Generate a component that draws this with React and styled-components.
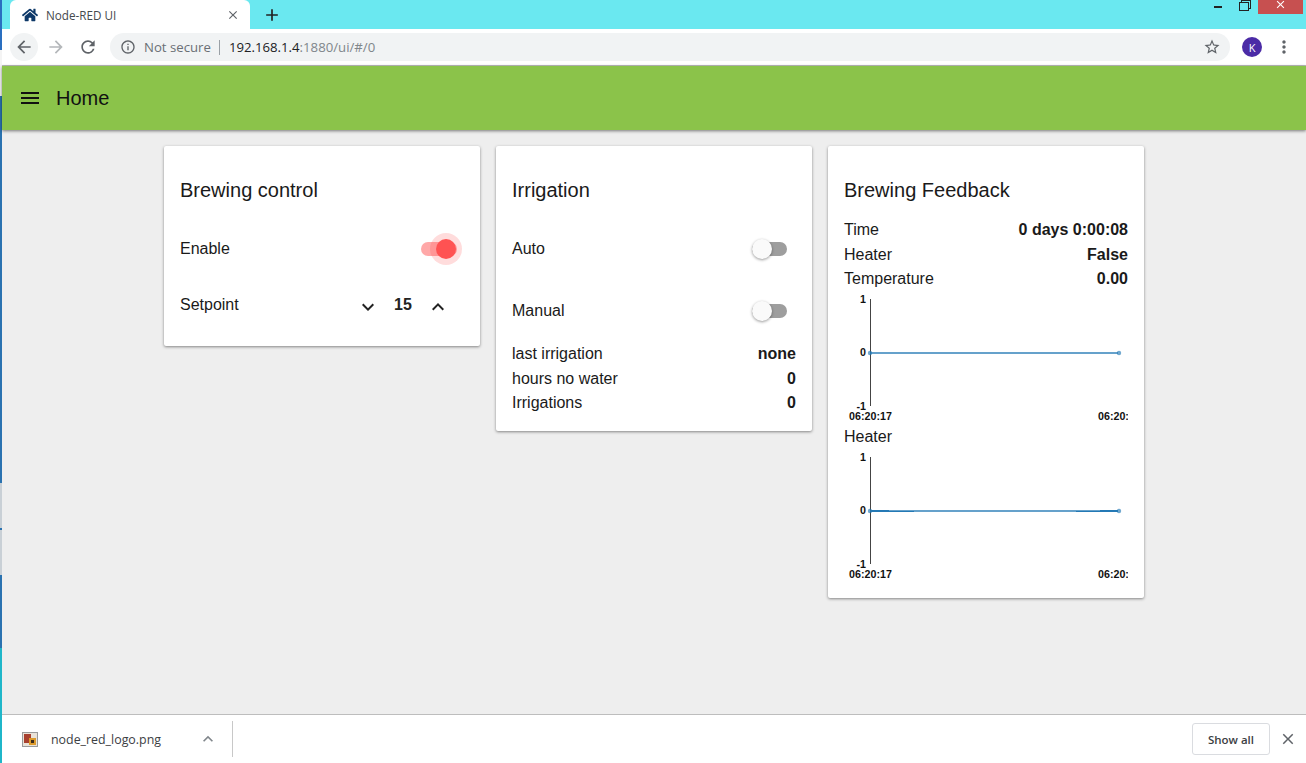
import React from 'react';
import styled, { createGlobalStyle } from 'styled-components';
import { FaHome } from 'react-icons/fa';
import {
  MdAdd,
  MdArrowBack,
  MdArrowForward,
  MdClose,
  MdInfoOutline,
  MdKeyboardArrowDown,
  MdKeyboardArrowUp,
  MdMenu,
  MdMoreVert,
  MdRefresh,
  MdStarBorder,
} from 'react-icons/md';

const GlobalStyle = createGlobalStyle`
  html, body {
    margin: 0;
    padding: 0;
    overflow: hidden;
  }
`;

const Desktop = styled.div`
  display: flex;
  width: 1306px;
  height: 763px;
  overflow: hidden;
  font-family: "Liberation Sans", Arial, sans-serif;
  color: #1a1a1a;
`;

// sliver of the window behind the browser, down the left side
const WindowEdge = styled.div`
  flex: 0 0 2px;
  background: linear-gradient(
    #2a6fc0 0 50px,
    #f4f4f4 50px 96px,
    #2a72b0 96px 483px,
    #c9d0d6 483px 528px,
    #2a72b0 528px 530px,
    #c9d0d6 530px 575px,
    #2a72b0 575px 648px,
    #1fb6c9 648px
  );
`;

const Browser = styled.div`
  flex: 1;
  display: flex;
  flex-direction: column;
  min-width: 0;
`;

const TabStrip = styled.div`
  flex: 0 0 29px;
  display: flex;
  align-items: stretch;
  padding-left: 8px;
  background: #6ae8f0;
`;

const Tab = styled.div`
  width: 240px;
  display: flex;
  align-items: center;
  padding: 0 10px 0 12px;
  box-sizing: border-box;
  background: #fff;
  border-radius: 6px 6px 0 0;
  font: 11.7px "Open Sans", sans-serif;
  color: #45494d;
`;

const TabTitle = styled.span`
  flex: 1;
  margin-left: 8px;
`;

const NewTab = styled.div`
  display: flex;
  align-items: center;
  margin-left: 12px;
  color: #222;
`;

const WindowControls = styled.div`
  margin-left: auto;
  display: flex;
  align-items: flex-start;
`;

const Minimize = styled.div`
  width: 8px;
  height: 2px;
  margin: 6px 17px 0 0;
  background: #222;
`;

const Restore = styled.div`
  width: 8px;
  height: 7px;
  margin: 2px 9px 0 0;
  border: 1px solid #222;
  box-shadow: 2px -2px 0 -1px #6ae8f0, 2px -2px 0 0 #222;
`;

const CloseButton = styled.div`
  width: 45px;
  height: 14px;
  margin-right: 3px;
  display: flex;
  align-items: flex-start;
  justify-content: center;
  background: #c75050;
  color: #fff;

  svg {
    margin-top: -2px;
  }
`;

const Toolbar = styled.div`
  flex: 0 0 37px;
  display: flex;
  align-items: center;
  box-sizing: border-box;
  padding: 0 0 0 8px;
  background: #fff;
  border-bottom: 1px solid #bdbdbd;
`;

const NavButton = styled.div`
  width: 28px;
  height: 28px;
  margin-right: ${(p) => p.$gap || 0}px;
  display: flex;
  align-items: center;
  justify-content: center;
  border-radius: 50%;
  background: ${(p) => (p.$active ? '#f1f3f4' : 'transparent')};
  color: ${(p) => (p.$disabled ? '#b4b7ba' : '#5f6368')};
`;

const Omnibox = styled.div`
  width: 1120px;
  height: 28px;
  margin-left: 8px;
  display: flex;
  align-items: center;
  box-sizing: border-box;
  padding: 0 9px 0 10px;
  border-radius: 14px;
  background: #f1f3f4;
  font: 13.2px "Open Sans", sans-serif;
  color: #5f6368;
`;

const NotSecure = styled.span`
  margin-left: 8px;
  padding-right: 8px;
  border-right: 1px solid #9aa0a6;
  line-height: 15px;
  color: #6a6f75;
`;

const Url = styled.span`
  margin-left: 9px;
  flex: 1;
  color: #80868b;

  b {
    font-weight: 400;
    color: #202124;
  }
`;

const Avatar = styled.div`
  width: 20px;
  height: 20px;
  margin-left: 12px;
  display: flex;
  align-items: center;
  justify-content: center;
  border-radius: 50%;
  background: #4b2ba6;
  color: #fff;
  font: 11px "Open Sans", sans-serif;
`;

const MenuDots = styled.div`
  margin-left: 12px;
  display: flex;
  color: #5f6368;
`;

const AppBar = styled.header`
  flex: 0 0 64px;
  display: flex;
  align-items: center;
  padding-left: 16px;
  background: #8bc34a;
  box-shadow: 0 1px 3px rgba(0, 0, 0, 0.5);
  position: relative;
  z-index: 1;
  color: #111;
`;

const AppTitle = styled.h1`
  margin: 0 0 0 14px;
  font-size: 20px;
  font-weight: 400;
`;

const Dashboard = styled.main`
  flex: 1;
  display: flex;
  align-items: flex-start;
  justify-content: center;
  gap: 16px;
  padding-top: 16px;
  background: #eeeeee;
`;

const Card = styled.section`
  width: 316px;
  height: ${(p) => p.$height}px;
  box-sizing: border-box;
  padding: 0 16px;
  background: #fff;
  border-radius: 2px;
  box-shadow: 0 1px 3px rgba(0, 0, 0, 0.45);
`;

const CardTitle = styled.h2`
  margin: 0;
  height: 71px;
  line-height: 88px;
  font-size: 20px;
  font-weight: 400;
`;

const ControlRow = styled.div`
  height: 56px;
  margin-top: ${(p) => p.$top ?? 4}px;
  display: flex;
  align-items: center;
  justify-content: space-between;
  font-size: 16px;
`;

const SwitchBox = styled.div`
  position: relative;
  width: ${(p) => (p.$on ? 36 : 35)}px;
  height: 14px;
  margin-right: ${(p) => (p.$on ? 7 : 9)}px;
  border-radius: 7px;
  background: ${(p) => (p.$on ? 'rgba(255, 82, 82, 0.5)' : '#9e9e9e')};
`;

const SwitchThumb = styled.div`
  position: absolute;
  top: -3px;
  left: ${(p) => (p.$on ? 15 : 0)}px;
  width: 20px;
  height: 20px;
  border-radius: 50%;
  background: ${(p) => (p.$on ? '#ff5252' : '#fafafa')};
  box-shadow: ${(p) => (p.$on
    ? '0 0 0 6px rgba(255, 82, 82, 0.2)'
    : '0 1px 3px rgba(0, 0, 0, 0.4)')};
`;

const Stepper = styled.div`
  display: flex;
  align-items: center;
  margin-right: 14px;
  color: #222;

  svg {
    margin-top: 4px;
  }

  b {
    width: 46px;
    text-align: center;
    font-size: 16px;
  }
`;

const InfoList = styled.div`
  margin-top: ${(p) => p.$top || 0}px;
`;

const InfoRow = styled.div`
  height: 25px;
  box-sizing: border-box;
  display: flex;
  align-items: center;
  justify-content: space-between;
  font-size: 16px;

  &:nth-child(2) {
    height: 24px;
    padding-top: 2px;
  }

  b {
    font-weight: 700;
  }
`;

const ChartLabel = styled.div`
  height: 25px;
  line-height: 25px;
  font-size: 16px;
`;

const ChartSvg = styled.svg`
  display: block;
  width: 284px;
  height: 133px;

  text {
    font-family: "Liberation Sans", sans-serif;
    font-size: 10.7px;
    font-weight: 700;
    fill: #111;
  }
`;

const DownloadBar = styled.footer`
  flex: 0 0 49px;
  display: flex;
  align-items: center;
  box-sizing: border-box;
  padding-left: 20px;
  background: #fff;
  border-top: 1px solid #bdbdbd;
`;

const FileName = styled.span`
  margin-left: 13px;
  font: 12.4px "Open Sans", sans-serif;
  color: #3c4043;
`;

const FileChevron = styled.div`
  display: flex;
  margin-left: 37px;
  color: #80868b;
`;

const Divider = styled.div`
  width: 1px;
  height: 36px;
  margin-left: 14px;
  background: #c8c8c8;
`;

const ShowAll = styled.button`
  margin-left: auto;
  width: 78px;
  height: 32px;
  padding: 0;
  background: #fff;
  border: 1px solid #dadce0;
  border-radius: 3px;
  font: 600 11.5px "Open Sans", sans-serif;
  color: #3c4043;
`;

const BarClose = styled.div`
  display: flex;
  margin: 0 9px;
  color: #5f6368;
`;

function FileIcon() {
  return (
    <svg width="16" height="15" viewBox="0 0 16 15">
      <rect x="0.5" y="0.5" width="15" height="14" fill="#e9e2d8" stroke="#999" />
      <rect x="2" y="2" width="7" height="9" fill="#a8402e" />
      <rect x="7" y="6" width="7" height="7" fill="#dc9a2c" />
      <rect x="9" y="8" width="3" height="3" fill="#3a2a1a" />
    </svg>
  );
}

function Toggle({ on }) {
  return (
    <SwitchBox $on={on}>
      <SwitchThumb $on={on} />
    </SwitchBox>
  );
}

function Chart({ overlap }) {
  return (
    <ChartSvg viewBox="0 0 284 133">
      <line x1="26.5" y1="8" x2="26.5" y2="115" stroke="#444" />
      <text x="22" y="12" textAnchor="end">1</text>
      <text x="22" y="65" textAnchor="end">0</text>
      <text x="22" y="119" textAnchor="end">-1</text>
      <line x1="26" y1="62" x2="274" y2="62" stroke="#2479b5" strokeOpacity="0.7" strokeWidth="2" />
      {overlap && (
        <>
          <line x1="27" y1="62" x2="45" y2="62" stroke="#2479b5" strokeWidth="2" />
          <line x1="45" y1="62.5" x2="70" y2="62.5" stroke="#2479b5" />
          <line x1="232" y1="62.5" x2="256" y2="62.5" stroke="#2479b5" />
          <line x1="256" y1="62" x2="274" y2="62" stroke="#2479b5" strokeWidth="2" />
        </>
      )}
      <circle cx="26" cy="62" r="2.2" fill="#2479b5" fillOpacity="0.65" />
      <circle cx="275" cy="62" r="2.2" fill="#2479b5" fillOpacity="0.65" />
      <text x="26.5" y="128.5" textAnchor="middle">06:20:17</text>
      <text x="254" y="128.5">06:20:</text>
    </ChartSvg>
  );
}

export default function App() {
  return (
    <Desktop>
      <GlobalStyle />
      <WindowEdge />
      <Browser>
        <TabStrip>
          <Tab>
            <FaHome size={16} color="#0d3868" />
            <TabTitle>Node-RED UI</TabTitle>
            <MdClose size={14} color="#5f6368" />
          </Tab>
          <NewTab><MdAdd size={20} /></NewTab>
          <WindowControls>
            <Minimize />
            <Restore />
            <CloseButton><MdClose size={13} /></CloseButton>
          </WindowControls>
        </TabStrip>
        <Toolbar>
          <NavButton $active $gap={4}><MdArrowBack size={20} /></NavButton>
          <NavButton $disabled $gap={4}><MdArrowForward size={20} /></NavButton>
          <NavButton><MdRefresh size={20} /></NavButton>
          <Omnibox>
            <MdInfoOutline size={16} />
            <NotSecure>Not secure</NotSecure>
            <Url><b>192.168.1.4</b>:1880/ui/#/0</Url>
            <MdStarBorder size={18} />
          </Omnibox>
          <Avatar>K</Avatar>
          <MenuDots><MdMoreVert size={20} /></MenuDots>
        </Toolbar>
        <AppBar>
          <MdMenu size={24} />
          <AppTitle>Home</AppTitle>
        </AppBar>
        <Dashboard>
          <Card $height={200}>
            <CardTitle>Brewing control</CardTitle>
            <ControlRow>
              Enable
              <Toggle on />
            </ControlRow>
            <ControlRow $top={0}>
              Setpoint
              <Stepper>
                <MdKeyboardArrowDown size={24} />
                <b>15</b>
                <MdKeyboardArrowUp size={24} />
              </Stepper>
            </ControlRow>
          </Card>
          <Card $height={285}>
            <CardTitle>Irrigation</CardTitle>
            <ControlRow>
              Auto
              <Toggle />
            </ControlRow>
            <ControlRow $top={6}>
              Manual
              <Toggle />
            </ControlRow>
            <InfoList $top={2}>
              <InfoRow>last irrigation<b>none</b></InfoRow>
              <InfoRow>hours no water<b>0</b></InfoRow>
              <InfoRow>Irrigations<b>0</b></InfoRow>
            </InfoList>
          </Card>
          <Card $height={452}>
            <CardTitle>Brewing Feedback</CardTitle>
            <InfoList>
              <InfoRow>Time<b>0 days 0:00:08</b></InfoRow>
              <InfoRow>Heater<b>False</b></InfoRow>
              <InfoRow>Temperature<b>0.00</b></InfoRow>
            </InfoList>
            <Chart />
            <ChartLabel>Heater</ChartLabel>
            <Chart overlap />
          </Card>
        </Dashboard>
        <DownloadBar>
          <FileIcon />
          <FileName>node_red_logo.png</FileName>
          <FileChevron><MdKeyboardArrowUp size={20} /></FileChevron>
          <Divider />
          <ShowAll>Show all</ShowAll>
          <BarClose><MdClose size={18} /></BarClose>
        </DownloadBar>
      </Browser>
    </Desktop>
  );
}
